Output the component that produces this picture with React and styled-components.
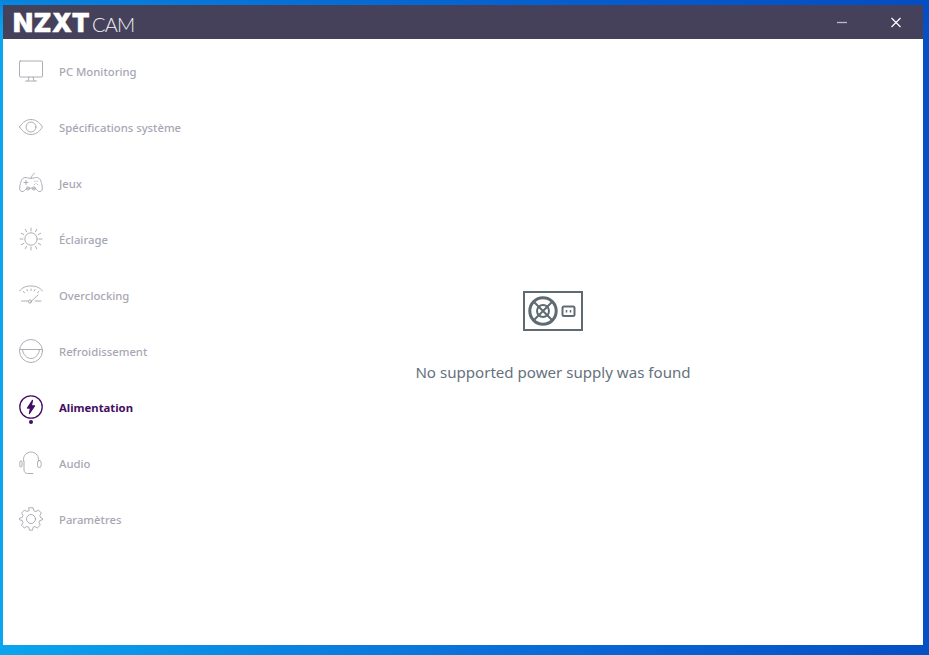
import styled, { createGlobalStyle } from "styled-components";

const GlobalStyle = createGlobalStyle`
  html, body {
    margin: 0;
    height: 100%;
  }
  body {
    font-family: "Noto Sans", "Open Sans", sans-serif;
    background: linear-gradient(90deg, #0aa5ee 0%, #0a7fe0 35%, #0862d2 70%, #0450c4 100%);
    overflow: hidden;
  }
`;

const Desktop = styled.div`
  height: 655px;
  padding: 5px 6px 10px 3px;
  box-sizing: border-box;
  background: linear-gradient(180deg, rgba(0, 70, 190, 0.35) 0, rgba(0, 70, 190, 0) 30px);
`;

const Window = styled.div`
  display: flex;
  flex-direction: column;
  height: 100%;
  background: #fff;
`;

const TitleBar = styled.header`
  display: flex;
  align-items: center;
  justify-content: space-between;
  height: 34px;
  flex-shrink: 0;
  background: #46415a;
`;

const Logo = styled.div`
  display: flex;
  align-items: baseline;
  padding: 2px 0 0 10px;
  color: #fff;
`;

const LogoMark = styled.span`
  font-family: "Inter", "Liberation Sans", sans-serif;
  font-size: 26px;
  font-weight: 900;
  letter-spacing: 0.4px;
  line-height: 26px;
  -webkit-text-stroke: 0.3px #fff;
`;

const LogoName = styled.span`
  margin-left: 2px;
  font-family: "Lato", "Open Sans", sans-serif;
  font-size: 20px;
  font-weight: 300;
  letter-spacing: -0.8px;
  line-height: 26px;
  color: #f2f1f5;
`;

const WindowControls = styled.div`
  display: flex;
  align-items: center;
  gap: 44px;
  padding-right: 22px;
`;

const ControlButton = styled.button`
  display: flex;
  padding: 0;
  border: 0;
  background: none;
`;

const Body = styled.div`
  display: flex;
  flex: 1;
  min-height: 0;
`;

const Sidebar = styled.nav`
  display: flex;
  flex-direction: column;
  width: 180px;
  flex-shrink: 0;
  padding-top: 4px;
`;

const NavItem = styled.div`
  position: relative;
  display: flex;
  align-items: center;
  gap: 16px;
  height: 56px;
  padding-left: 16px;
  color: ${(p) => (p.$active ? "#440e62" : "#a8a6b4")};
`;

const NavIcon = styled.svg`
  width: 24px;
  height: 24px;
  flex-shrink: 0;
  fill: none;
  stroke: ${(p) => (p.$active ? "#440e62" : "#a5a5ad")};
  stroke-width: ${(p) => (p.$active ? 1.3 : 0.9)};
  stroke-linecap: round;
  stroke-linejoin: round;
`;

const NavLabel = styled.span`
  font-size: 11.3px;
  font-weight: ${(p) => (p.$active ? 700 : 500)};
  white-space: nowrap;
`;

const ActiveDot = styled.span`
  position: absolute;
  left: 26px;
  top: 41px;
  width: 4px;
  height: 4px;
  border-radius: 50%;
  background: #440e62;
`;

const Main = styled.main`
  flex: 1;
  display: flex;
  flex-direction: column;
  align-items: center;
  padding-top: 252px;
`;

const PsuIcon = styled.svg`
  width: 60px;
  height: 40px;
  display: block;
  fill: none;
  stroke: #5f6b73;
`;

const Message = styled.p`
  margin: 31px 0 0;
  font-size: 15.1px;
  line-height: 20px;
  color: #66717e;
`;

const navItems = [
  {
    label: "PC Monitoring",
    icon: (
      <>
        <rect x="0.5" y="2" width="23" height="16" rx="0.8" />
        <path d="M10 18 9 22M14 18l1 4M6.500 22h11" />
      </>
    ),
  },
  {
    label: "Spécifications système",
    icon: (
      <>
        <path d="M0.500 12C4 6.600 8 4.500 12 4.500S20 6.600 23.500 12C20 17.400 16 19.500 12 19.500S4 17.400 0.500 12Z" />
        <circle cx="12" cy="12" r="5" />
      </>
    ),
  },
  {
    label: "Jeux",
    icon: (
      <>
        <path d="M6.500 6.500C8 6.500 9 7.300 12 7.300S16 6.500 17.500 6.500C20.500 6.500 21.800 9 22.600 12.500 23.400 16 24 18.500 22.300 20 20.500 21.300 18.800 20.200 17.500 18.500 16.800 17.600 16 17.200 15 17.200H9C8 17.200 7.200 17.600 6.500 18.500 5.200 20.200 3.500 21.300 1.700 20 0 18.500.6 16 1.400 12.500 2.200 9 3.500 6.500 6.500 6.500Z" />
        <path d="M12 7.300C12.500 5 14 3.500 15.500 2M5 11.500h4M7 9.500v4M15.500 10l.6.6M18.500 10l-.6.6M15.500 13.500l.6-.6M18.500 13.500l-.6-.6" />
        <circle cx="9" cy="17.500" r="1.600" />
        <circle cx="15" cy="17.500" r="1.600" />
      </>
    ),
  },
  {
    label: "Éclairage",
    icon: (
      <>
        <circle cx="12" cy="12" r="6.200" />
        <path d="M12 1v3M12 20v3M1 12h3M20 12h3M6.300 2.300l1.200 2.500M16.500 19.200l1.200 2.500M17.700 2.300l-1.200 2.500M7.500 19.200l-1.200 2.500M2.300 6.300l2.500 1.200M19.200 16.500l2.500 1.200M21.700 6.300l-2.500 1.200M4.800 16.500l-2.500 1.200" />
      </>
    ),
  },
  {
    label: "Overclocking",
    icon: (
      <>
        <path d="M0.500 8C3 4.500 7 3 12 3S21 4.500 23.500 8" />
        <path d="M4.500 8.500 5.500 9.800M8 6.500 8.600 8M12 6v1.600M16 6.500 15.400 8M19.500 8.500 18.500 9.800" strokeDasharray="1.500 0.800" />
        <path d="M2.500 18H9M16 18h6M11 19.500 19 12" />
        <circle cx="11" cy="18.500" r="1.600" />
      </>
    ),
  },
  {
    label: "Refroidissement",
    icon: (
      <>
        <circle cx="12" cy="12" r="11.500" />
        <path d="M1 10.500H23" />
        <path d="M3.500 10.500C4 15.500 7.500 19.500 12 19.500S20 15.500 20.500 10.500" />
      </>
    ),
  },
  {
    label: "Alimentation",
    active: true,
    icon: (
      <>
        <circle cx="12" cy="12" r="11.200" />
        <path d="M13.400 5.500 8.500 13H11.600L10.400 18.500 15.500 10.800H12.300Z" fill="#440e62" />
      </>
    ),
  },
  {
    label: "Audio",
    icon: (
      <>
        <path d="M4.500 10V8.500C4.500 4.200 8 1 12 1S19.500 4.200 19.500 8.500V10" />
        <rect x="0.800" y="10" width="2.200" height="6" rx="1.100" />
        <rect x="18.500" y="9.500" width="3.600" height="7" rx="1.800" />
        <path d="M5 10V19C5 21 6.500 22.500 8.500 22.500H14" />
      </>
    ),
  },
  {
    label: "Paramètres",
    icon: (
      <>
        <circle cx="12" cy="12" r="4.500" />
        <path d="M10 .8H14L14.800 3.700 16.900 4.600 19.500 3.100 22.300 6 20.800 8.600 21.700 10.700 23.500 11.400V12.800L20.700 13.600 19.900 15.500 21.300 18.100 18.300 21 15.900 19.500 14 20.300 13.500 23.200H10.500L9.800 20.300 7.800 19.500 5.300 21 2.500 18.100 4 15.500 3.200 13.500.5 12.800V11.200L3.200 10.500 4 8.500 2.600 6 5.400 3.100 7.900 4.500 9.900 3.700Z" />
      </>
    ),
  },
];

export default function App() {
  return (
    <>
      <GlobalStyle />
      <Desktop>
        <Window>
          <TitleBar>
            <Logo>
              <LogoMark>NZXT</LogoMark>
              <LogoName>CAM</LogoName>
            </Logo>
            <WindowControls>
              <ControlButton aria-label="Minimize">
                <svg width="10" height="11" viewBox="0 0 10 11">
                  <path d="M0 5.500h10" stroke="#bcbac6" strokeWidth="1.300" />
                </svg>
              </ControlButton>
              <ControlButton aria-label="Close">
                <svg width="10" height="11" viewBox="0 0 10 11">
                  <path d="M.5 1l9 9M9.500 1l-9 9" stroke="#fff" strokeWidth="1.200" />
                </svg>
              </ControlButton>
            </WindowControls>
          </TitleBar>
          <Body>
            <Sidebar>
              {navItems.map((item) => (
                <NavItem key={item.label} $active={item.active}>
                  <NavIcon viewBox="0 0 24 24" $active={item.active}>
                    {item.icon}
                  </NavIcon>
                  <NavLabel $active={item.active}>{item.label}</NavLabel>
                  {item.active && <ActiveDot />}
                </NavItem>
              ))}
            </Sidebar>
            <Main>
              <PsuIcon viewBox="0 0 60 40">
                <rect x="1" y="1" width="58" height="38" strokeWidth="2" />
                <circle cx="20" cy="20" r="13.200" strokeWidth="3" />
                <circle cx="20" cy="20" r="6" strokeWidth="2" />
                <path d="M11 11l18 18M29 11 11 29" strokeWidth="2" />
                <rect x="39.500" y="15.500" width="12" height="9.500" rx="1.500" strokeWidth="2" />
                <path d="M43.500 19v2.500M47.500 19v2.500" strokeWidth="1.500" />
              </PsuIcon>
              <Message>No supported power supply was found</Message>
            </Main>
          </Body>
        </Window>
      </Desktop>
    </>
  );
}
